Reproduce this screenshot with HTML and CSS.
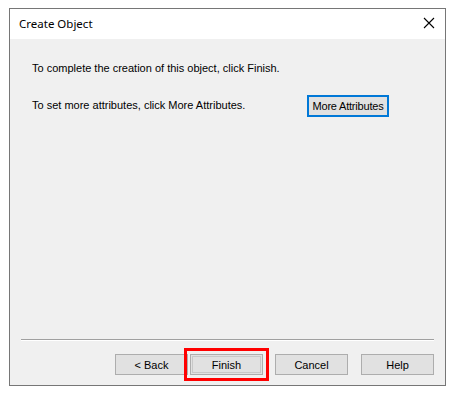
FILE: index.html
```html
<!DOCTYPE html>
<html>
<head>
<meta charset="utf-8">
<link rel="stylesheet" href="styles.css">
</head>
<body>
<div class="dialog">
  <div class="titlebar">
    <span class="title">Create Object</span>
    <svg class="close" width="12" height="12" viewBox="0 0 12 12"><path d="M1 1L11 11M11 1L1 11" stroke="#000" stroke-width="1.1" fill="none"/></svg>
  </div>
  <div class="body">
    <div class="content">
      <p class="line1">To complete the creation of this object, click Finish.</p>
      <div class="row2">
        <p class="line2">To set more attributes, click More Attributes.</p>
        <button class="btn more">More Attributes</button>
      </div>
    </div>
    <div class="footer">
      <div class="sep"></div>
      <div class="buttons">
        <button class="btn back">&lt; Back</button>
        <button class="btn finish">Finish</button>
        <button class="btn cancel">Cancel</button>
        <button class="btn help">Help</button>
      </div>
    </div>
  </div>
</div>
</body>
</html>
```

FILE: styles.css
```css
html, body {
  margin: 0;
  padding: 0;
  background: #ffffff;
}
body {
  padding: 8px 0 0 9px;
  font-family: "Liberation Sans", Arial, sans-serif;
}
.dialog {
  box-sizing: border-box;
  width: 437px;
  height: 378px;
  border: 1px solid #767676;
  background: #f0f0f0;
  display: flex;
  flex-direction: column;
}
.titlebar {
  height: 30px;
  background: #ffffff;
  display: flex;
  align-items: center;
  justify-content: space-between;
  padding: 0 10px 0 9px;
}
.title {
  font-family: "Noto Sans", "Open Sans", sans-serif;
  font-size: 11.5px;
  color: #000;
  position: relative;
  top: -1px;
}
.close {
  display: block;
  margin-top: -2px;
}
.body {
  flex: 1;
  display: flex;
  flex-direction: column;
}
.content {
  flex: 1;
  padding: 23px 0 0 22px;
  font-size: 11px;
  color: #000;
}
.content p {
  margin: 0;
  line-height: 13px;
}
.row2 {
  display: flex;
  align-items: flex-start;
  margin-top: 20px;
}
.line2 {
  width: 275px;
  padding-top: 4px;
}
.btn {
  box-sizing: border-box;
  font-family: "Liberation Sans", Arial, sans-serif;
  font-size: 11px;
  color: #000;
  background: #e1e1e1;
  border: 1px solid #adadad;
  height: 21px;
  padding: 0;
  margin: 0;
}
.more {
  width: 82px;
  height: 22px;
  border: 2px solid #0078d7;
  letter-spacing: -0.2px;
}
.footer {
  padding: 0 11px 10px 11px;
}
.sep {
  height: 1px;
  background: #a0a0a0;
  border-bottom: 1px solid #ffffff;
}
.buttons {
  display: flex;
  justify-content: flex-end;
  margin-top: 13px;
}
.buttons .btn {
  width: 73px;
}
.finish {
  margin-left: 2px;
  outline: 3px solid #ff0000;
  outline-offset: 3px;
  box-shadow: inset 0 0 0 1px #e1e1e1, inset 0 0 0 2px #c8c8c8;
}
.cancel {
  margin-left: 12px;
}
.help {
  margin-left: 13px;
}
```
